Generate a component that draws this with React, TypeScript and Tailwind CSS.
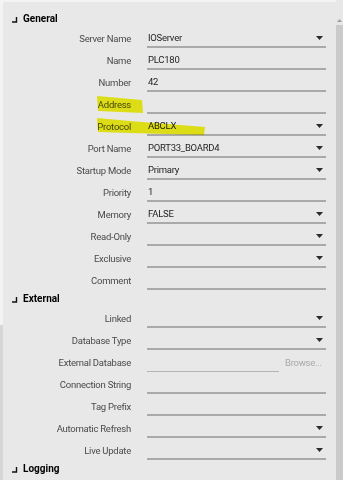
import React from "react";

type Row = {
  label: string;
  value?: string;
  dropdown?: boolean;
  browse?: boolean;
};

const sections: { title: string; rows: Row[] }[] = [
  {
    title: "General",
    rows: [
      { label: "Server Name", value: "IOServer", dropdown: true },
      { label: "Name", value: "PLC180" },
      { label: "Number", value: "42" },
      { label: "Address" },
      { label: "Protocol", value: "ABCLX", dropdown: true },
      { label: "Port Name", value: "PORT33_BOARD4", dropdown: true },
      { label: "Startup Mode", value: "Primary", dropdown: true },
      { label: "Priority", value: "1" },
      { label: "Memory", value: "FALSE", dropdown: true },
      { label: "Read-Only", dropdown: true },
      { label: "Exclusive", dropdown: true },
      { label: "Comment" },
    ],
  },
  {
    title: "External",
    rows: [
      { label: "Linked", dropdown: true },
      { label: "Database Type", dropdown: true },
      { label: "External Database", browse: true },
      { label: "Connection String" },
      { label: "Tag Prefix" },
      { label: "Automatic Refresh", dropdown: true },
      { label: "Live Update", dropdown: true },
    ],
  },
  { title: "Logging", rows: [] },
];

function Arrow() {
  return (
    <svg width="7" height="4" viewBox="0 0 7 4" className="shrink-0">
      <path d="M0 0 H7 L3.5 4 Z" fill="#2b2b2b" />
    </svg>
  );
}

// small collapse marker in front of section titles
function Corner() {
  return (
    <svg width="6" height="6" viewBox="0 0 6 6" className="shrink-0 mt-[1px]">
      <path d="M4.5 0 V5 H0" stroke="#111" strokeWidth="1.4" fill="none" />
    </svg>
  );
}

function Field({ row }: { row: Row }) {
  if (row.browse) {
    return (
      <div className="flex items-end h-[20px] w-[179px]">
        <div className="w-[132px] h-full border-b border-[#b4b4b4]" />
        <span className="ml-[6px] mb-[5px] text-[#a8a8a8] leading-none">Browse...</span>
      </div>
    );
  }
  return (
    <div className="flex items-center justify-between h-[20px] w-[179px] border-b-2 border-[#a9a9a9] pl-[1px] pr-[3px] pt-[1px]">
      <span className="text-[#1e1e1e]">{row.value ?? ""}</span>
      {row.dropdown && <Arrow />}
    </div>
  );
}

export default function App() {
  return (
    <div
      className="relative w-[343px] h-[480px] overflow-hidden bg-[#e8e8e8] flex text-[9.5px] tracking-[-0.25px] leading-none"
      style={{ fontFamily: "Roboto, 'Liberation Sans', sans-serif" }}
    >
      <div className="w-[3px] flex flex-col shrink-0">
        <div className="h-[325px] bg-[#f3f3f3]" />
        <div className="flex-1 bg-[#d6d6d6]" />
      </div>
      <div className="flex-1 flex flex-col border-t-2 border-[#f3f3f3] pt-[9px]">
        {sections.map((s) => (
          <div key={s.title} className="flex flex-col">
            <div className="h-[16px] flex items-center pl-[9px] gap-[5px] font-bold text-black text-[10px] tracking-normal">
              <Corner />
              <span>{s.title}</span>
            </div>
            {s.rows.map((r) => (
              <div key={r.label} className="h-[22px] flex items-center">
                <div className="w-[128px] text-right text-[#4a4a4a] mt-[1px]">{r.label}</div>
                <div className="ml-[16px]">
                  <Field row={r} />
                </div>
              </div>
            ))}
          </div>
        ))}
      </div>
      <div className="w-[7px] flex flex-col shrink-0">
        <div className="h-[25px] flex items-end justify-center pb-[3px]">
          <svg width="5" height="3" viewBox="0 0 5 3">
            <path d="M0 3 L2.5 0 L5 3 Z" fill="#a0a0a0" />
          </svg>
        </div>
        <div className="flex-1 bg-[#cacaca]" />
      </div>
      <svg
        className="absolute left-0 top-0 pointer-events-none mix-blend-multiply"
        width="343"
        height="480"
        viewBox="0 0 343 480"
      >
        <path d="M97 96 L142 100 L143 113 L98 111 Z" fill="#f2f200" opacity="0.9" />
        <path d="M97 118 L130 121 L205 127 L204 135 L130 133 L98 132 Z" fill="#f2f200" opacity="0.9" />
      </svg>
    </div>
  );
}
